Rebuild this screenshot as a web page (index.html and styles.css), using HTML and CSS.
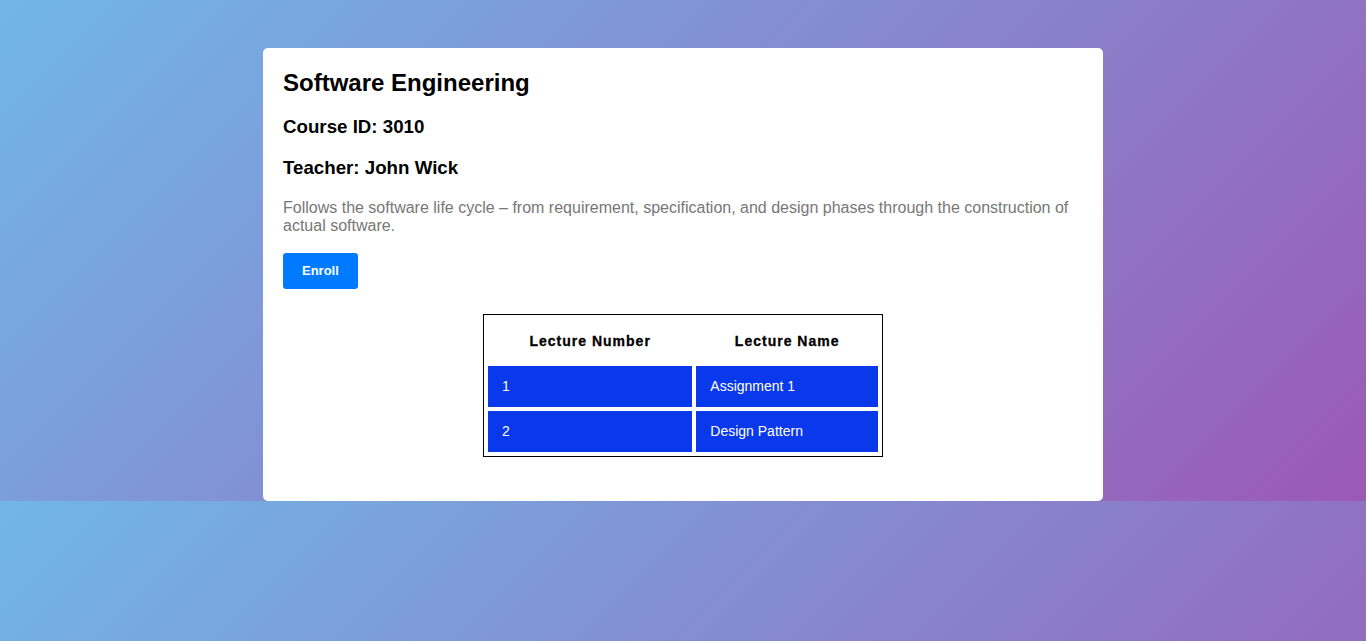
FILE: index.html
```html
<!DOCTYPE html>
<html lang="en">
<head>
<meta charset="utf-8">
<title>Software Engineering</title>
<link rel="stylesheet" href="styles.css">
</head>
<body>
<div class="card">
  <h2 class="title">Software Engineering</h2>
  <h3 class="meta">Course ID: 3010</h3>
  <h3 class="meta">Teacher: John Wick</h3>
  <p class="desc">Follows the software life cycle – from requirement, specification, and design phases through the construction of actual software.</p>
  <button class="enroll">Enroll</button>
  <table class="lectures">
    <thead>
      <tr><th>Lecture Number</th><th>Lecture Name</th></tr>
    </thead>
    <tbody>
      <tr><td>1</td><td>Assignment 1</td></tr>
      <tr><td>2</td><td>Design Pattern</td></tr>
    </tbody>
  </table>
</div>
</body>
</html>
```

FILE: styles.css
```css
html {
  margin: 0;
  padding: 0;
}

body {
  margin: 0;
  padding: 48px 0 0 0;
  background: linear-gradient(135deg, #71b7e6, #9b59b6);
  font-family: "Liberation Sans", Arial, sans-serif;
}

.card {
  width: 800px;
  margin: 0 auto;
  padding: 21px 20px 20px 20px;
  background: #ffffff;
  border-radius: 5px;
}

.title {
  margin: 0 0 18.9px 0;
  font-size: 24px;
  font-weight: bold;
  color: #000;
}

.meta {
  margin: 18.72px 0;
  font-size: 18.72px;
  font-weight: bold;
  color: #000;
}

.desc {
  margin: 20px 0 16px 0;
  font-size: 16px;
  color: #777777;
}

.enroll {
  display: block;
  margin: 18px 0 0 0;
  padding: 10px 19px;
  border: none;
  border-radius: 3px;
  background: #007bff;
  color: #ffffff;
  font-family: "Liberation Sans", Arial, sans-serif;
  font-size: 13px;
  font-weight: bold;
  line-height: 16px;
}

.lectures {
  width: 400px;
  margin: 25px auto 24px auto;
  border: 1px solid #000;
  border-spacing: 4px;
  font-size: 14px;
}

.lectures th {
  padding: 14px 15px 13px 15px;
  line-height: 16px;
  font-weight: bold;
  letter-spacing: 1px;
  color: #000;
  background: #fff;
  -webkit-text-stroke: 0.3px #000;
}

.lectures td {
  padding: 12px 15px 12px 14px;
  line-height: 17px;
  background: #0a39eb;
  color: #ffffff;
  text-align: left;
}
```
